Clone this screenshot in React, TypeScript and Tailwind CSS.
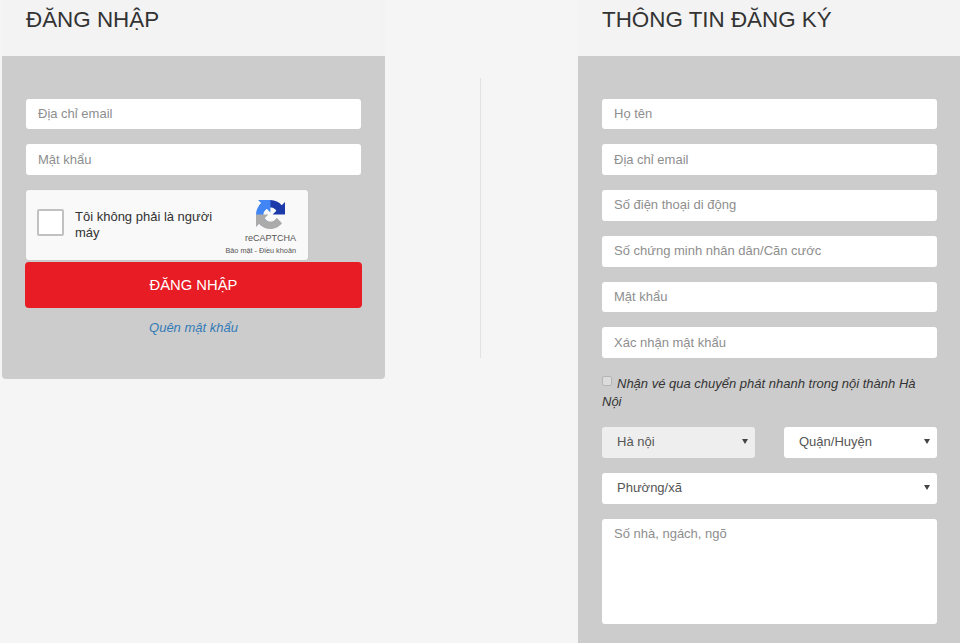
const font = "font-['Liberation_Sans',Arial,sans-serif]";
const inputClass =
  "block w-full h-[30.8px] rounded-[3px] bg-white px-3 pb-[1px] text-[13px] text-[#555] placeholder:text-[#8e8e8e] outline-none";

function RecaptchaLogo() {
  return (
    <svg viewBox="0 0 64 64" className="mr-[11px] h-[29px] w-[29px]">
      <path
        fill="#1c3aa9"
        d="M64 31.955l-.033-1.37V4.687l-7.16 7.16C50.948 4.674 42.033.093 32.05.093c-10.4 0-19.622 4.96-25.458 12.64l11.736 11.86a15.55 15.55 0 0 1 4.754-5.334c2.05-1.6 4.952-2.906 8.968-2.906.485 0 .86.057 1.135.163 4.976.393 9.288 3.14 11.828 7.124l-8.307 8.307L64 31.953"
      />
      <path
        fill="#4285f4"
        d="M31.862.094l-1.37.033H4.594l7.16 7.16C4.58 13.147 0 22.06 0 32.046c0 10.4 4.96 19.622 12.64 25.458L24.5 45.768a15.55 15.55 0 0 1-5.334-4.754c-1.6-2.05-2.906-4.952-2.906-8.968 0-.485.057-.86.163-1.135.393-4.976 3.14-9.288 7.124-11.828l8.307 8.307L31.86.095"
      />
      <path
        fill="#ababab"
        d="M.001 32.045l.033 1.37v25.898l7.16-7.16c5.86 7.173 14.774 11.754 24.76 11.754 10.4 0 19.622-4.96 25.458-12.64l-11.736-11.86a15.55 15.55 0 0 1-4.754 5.334c-2.05 1.6-4.952 2.906-8.968 2.906-.485 0-.86-.057-1.135-.163-4.976-.393-9.288-3.14-11.828-7.124l8.307-8.307L0 32.047"
      />
    </svg>
  );
}

function Recaptcha() {
  return (
    <div className="flex h-[70px] w-[282px] items-center rounded-[3px] bg-[#f9f9f9] pl-[11px] pr-[12px] shadow-[0_0_2px_rgba(0,0,0,0.06)]">
      <div className="-mt-[5px] h-[27px] w-[27px] shrink-0 rounded-[2px] border-2 border-[#c1c1c1] bg-white" />
      <div className="ml-[11px] w-[146px] shrink-0 text-[13px] leading-[16px] text-[#333]">
        Tôi không phải là người máy
      </div>
      <div className="ml-auto flex h-full flex-col items-end pt-[10px]">
        <RecaptchaLogo />
        <div className="mt-[3px] whitespace-nowrap text-[9px] leading-[12px] text-[#555]">reCAPTCHA</div>
        <div className="mt-[2px] whitespace-nowrap text-[7.3px] leading-[10px] text-[#555]">Bảo mật - Điều khoản</div>
      </div>
    </div>
  );
}

function Select({ label, bg, className = "" }: { label: string; bg: string; className?: string }) {
  return (
    <div className={`relative ${className}`}>
      <select
        className={`block h-[30.8px] w-full appearance-none rounded-[3px] pb-[1px] pl-[15px] pr-6 text-[13px] text-[#555] outline-none ${bg}`}
        defaultValue={label}
      >
        <option>{label}</option>
      </select>
      <span className="pointer-events-none absolute right-[7px] top-[12px] h-0 w-0 border-x-[3px] border-t-[5px] border-x-transparent border-t-[#444]" />
    </div>
  );
}

export default function App() {
  return (
    <div className={`${font} flex h-[643px] w-[960px] overflow-hidden bg-[#f5f5f5]`}>
      {/* login */}
      <div className="ml-[2px] w-[383px] shrink-0">
        <div className="h-[56px] bg-[#f3f3f3] px-6 pt-[6px]">
          <h2 className="text-[22.4px] leading-[27px] text-[#333]">ĐĂNG NHẬP</h2>
        </div>
        <div className="h-[323px] rounded-b-[4px] bg-[#ccc] px-6 pt-[42.5px]">
          <div className="flex flex-col gap-[15px]">
            <input className={inputClass} placeholder="Địa chỉ email" />
            <input className={inputClass} placeholder="Mật khẩu" type="password" />
          </div>
          <div className="mt-[15px]">
            <Recaptcha />
          </div>
          <button className="mt-[2.4px] -ml-[1px] block h-[46px] w-[337px] rounded-[4px] bg-[#e81c24] text-[14.8px] text-white">
            ĐĂNG NHẬP
          </button>
          <a className="mt-[10px] block text-center text-[13px] italic leading-[20px] text-[#337ab7]">
            Quên mật khẩu
          </a>
        </div>
      </div>

      {/* divider */}
      <div className="w-[193px] shrink-0 pl-[95px] pt-[78px]">
        <div className="h-[280px] w-px bg-[#e2e2e2]" />
      </div>

      {/* register */}
      <div className="w-[382px] shrink-0">
        <div className="h-[56px] bg-[#f3f3f3] px-6 pt-[6px]">
          <h2 className="text-[22.4px] leading-[27px] text-[#333]">THÔNG TIN ĐĂNG KÝ</h2>
        </div>
        <div className="h-[587px] bg-[#ccc] pl-6 pr-[23px] pt-[42.5px]">
          <div className="flex flex-col gap-[15px]">
            <input className={inputClass} placeholder="Họ tên" />
            <input className={inputClass} placeholder="Địa chỉ email" />
            <input className={inputClass} placeholder="Số điện thoại di động" />
            <input className={inputClass} placeholder="Số chứng minh nhân dân/Căn cước" />
            <input className={inputClass} placeholder="Mật khẩu" type="password" />
            <input className={inputClass} placeholder="Xác nhận mật khẩu" type="password" />
          </div>
          <label className="mt-[16.6px] block text-[13px] italic leading-[18.5px] text-[#333]">
            <span className="mr-[5px] inline-block h-[10px] w-[10px] rounded-[2px] border border-[#b5b5b5] bg-[#dcdcdc] align-[2px]" />
            Nhận vé qua chuyển phát nhanh trong nội thành Hà Nội
          </label>
          <div className="mt-[15.4px] grid grid-cols-2 gap-x-[29px] gap-y-[15px]">
            <Select label="Hà nội" bg="bg-[#eee]" />
            <Select label="Quận/Huyện" bg="bg-white" />
            <Select label="Phường/xã" bg="bg-white" className="col-span-2" />
          </div>
          <textarea
            className="mt-[15.4px] block h-[105px] w-full resize-none rounded-[3px] bg-white px-3 py-[5px] text-[13px] leading-[20px] text-[#555] placeholder:text-[#8e8e8e] outline-none"
            placeholder="Số nhà, ngách, ngõ"
          />
        </div>
      </div>
    </div>
  );
}
